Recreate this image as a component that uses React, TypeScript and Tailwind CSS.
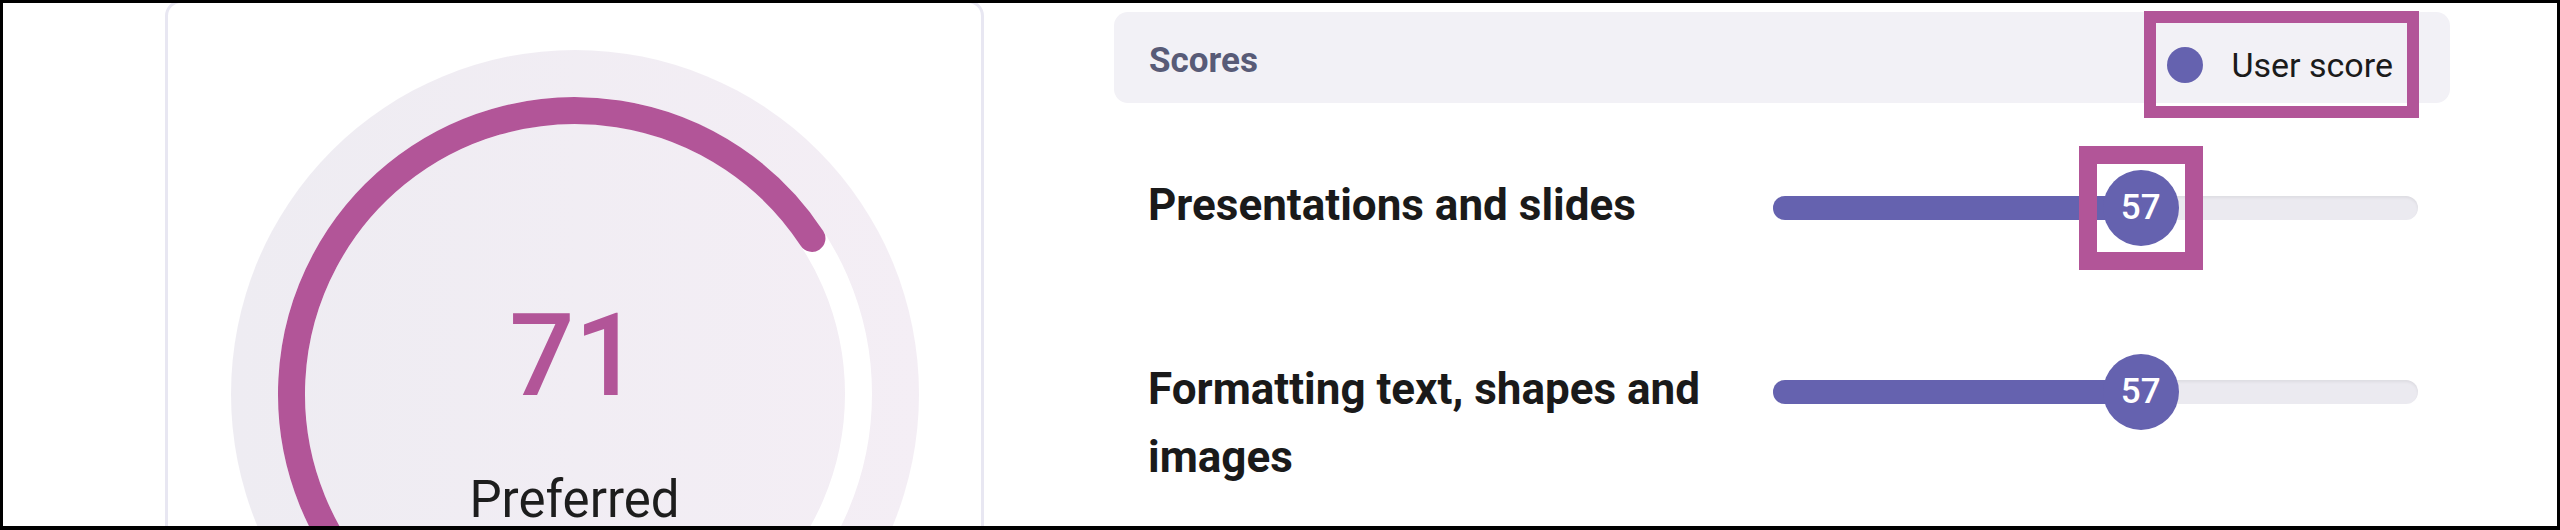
import React from "react";

type Skill = {
  label: string;
  score: number;
  highlighted?: boolean;
};

const skills: Skill[] = [
  { label: "Presentations and slides", score: 57, highlighted: true },
  { label: "Formatting text, shapes and images", score: 57 },
];

// point on a circle, angle measured clockwise from 12 o'clock
const polar = (cx: number, cy: number, r: number, deg: number) => {
  const a = (deg * Math.PI) / 180;
  return [cx + r * Math.sin(a), cy - r * Math.cos(a)];
};

const arcPath = (cx: number, cy: number, r: number, from: number, to: number) => {
  const [x1, y1] = polar(cx, cy, r, from);
  const [x2, y2] = polar(cx, cy, r, to);
  const large = to - from > 180 ? 1 : 0;
  return `M ${x1} ${y1} A ${r} ${r} 0 ${large} 1 ${x2} ${y2}`;
};

const Gauge = ({ value, label }: { value: number; label: string }) => {
  const size = 688;
  const c = size / 2;
  const r = 283.5;
  const start = -135;
  const end = start + (270 * value) / 100;

  return (
    <div className="relative w-[688px] h-[688px] shrink-0 rounded-full bg-linear-to-r from-[#eeecf2] to-[#f4eef5]">
      <svg
        className="absolute inset-0"
        width={size}
        height={size}
        viewBox={`0 0 ${size} ${size}`}
      >
        <path
          d={arcPath(c, c, r, start, 135)}
          fill="none"
          stroke="#ffffff"
          strokeWidth={27}
          strokeLinecap="round"
        />
        <path
          d={arcPath(c, c, r, start, end)}
          fill="none"
          stroke="#b25598"
          strokeWidth={27}
          strokeLinecap="round"
        />
      </svg>
      <div className="relative flex flex-col items-center pt-[248px]">
        <span className="text-[115px] leading-none font-medium text-[#b25598]">
          {value}
        </span>
        <span className="mt-[61px] text-[51px] leading-none text-[#1d1d1d]">
          {label}
        </span>
      </div>
    </div>
  );
};

const Highlight = ({ inset, width }: { inset: string; width: string }) => (
  <div
    className={`pointer-events-none absolute ${inset} ${width} border-[#b25598]`}
  />
);

const SkillRow = ({ skill }: { skill: Skill }) => (
  <div className="flex items-start pl-[34px] pr-[32px]">
    <p className="w-[625px] shrink-0 text-[44px] leading-[68px] font-bold text-[#1a1a1a]">
      {skill.label}
    </p>
    <div className="relative mt-[3px] flex h-[68px] flex-1 items-center">
      <div className="relative h-[24px] w-full rounded-full bg-[#ebeaf0] shadow-[inset_0_2px_3px_rgba(0,0,0,0.06)]">
        <div
          className="absolute left-0 top-0 h-full rounded-full bg-[#6562af]"
          style={{ width: `${skill.score}%` }}
        />
        <div
          className="absolute top-1/2 flex h-[76px] w-[76px] -translate-y-1/2 items-center justify-center rounded-full bg-[#6562af] text-[35px] font-medium text-white"
          style={{ left: `calc(${skill.score}% - 38px)` }}
        >
          {skill.score}
          {skill.highlighted && (
            <Highlight inset="-inset-[24px]" width="border-[18px]" />
          )}
        </div>
      </div>
    </div>
  </div>
);

export default function App() {
  return (
    <div className="h-[530px] w-[2560px] overflow-hidden border-[3px] border-b-4 border-black bg-white font-['Roboto',sans-serif]">
      <div className="flex items-start">
        {/* overall score card */}
        <section className="-mt-[3px] ml-[162px] flex h-[620px] w-[819px] shrink-0 justify-center rounded-[16px] border-[3px] border-[#e8e7f2] pt-[47px]">
          <Gauge value={71} label="Preferred" />
        </section>

        {/* scores list */}
        <section className="ml-[130px] mt-[9px] flex w-[1336px] shrink-0 flex-col">
          <div className="flex h-[91px] items-start justify-between rounded-[14px] bg-[#f2f1f6] pl-[35px] pr-[43px]">
            <h3 className="mt-[31px] text-[35px] leading-none font-bold text-[#585b77]">
              Scores
            </h3>
            <div className="relative mt-[11px] flex h-[83px] items-center gap-[28px] pl-[11px] pr-[14px]">
              <span className="h-[36px] w-[36px] rounded-full bg-[#6562af]" />
              <span className="text-[34px] leading-none text-[#1b1b1b]">
                User score
              </span>
              <Highlight inset="-inset-[12px]" width="border-[12px]" />
            </div>
          </div>

          <div className="mt-[68px] flex flex-col gap-[113px]">
            {skills.map((s, idx) => (
              <SkillRow key={idx} skill={s} />
            ))}
          </div>
        </section>
      </div>
    </div>
  );
}
